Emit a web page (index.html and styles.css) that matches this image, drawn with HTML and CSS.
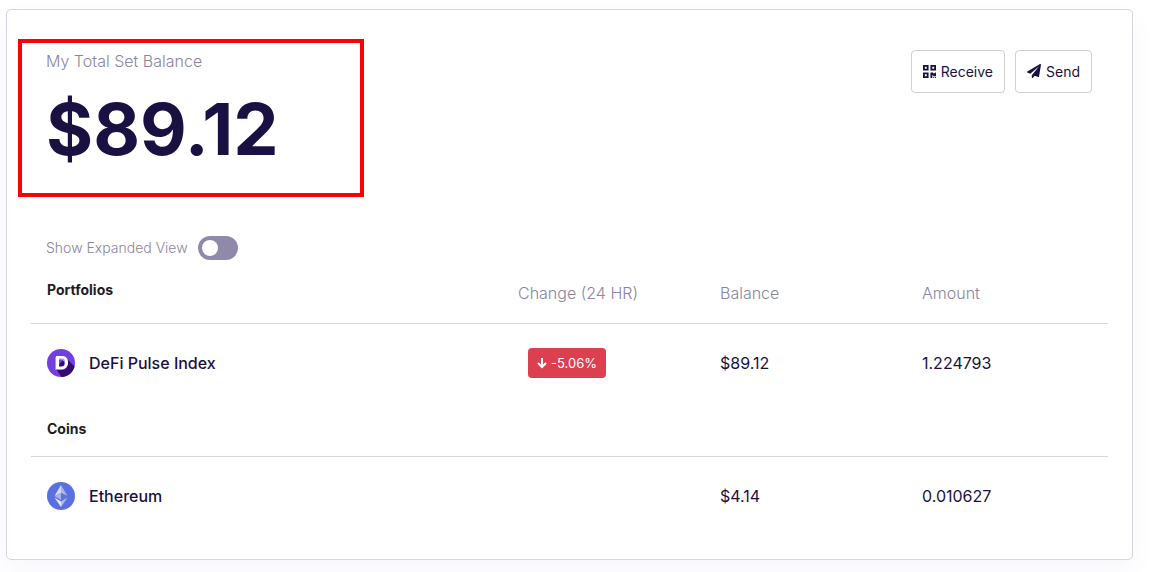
FILE: index.html
```html
<!DOCTYPE html>
<html lang="en">
<head>
    <meta charset="UTF-8">
    <meta name="viewport" content="width=device-width, initial-scale=1.0">
    <title>My Total Set Balance</title>
    <link rel="stylesheet" href="styles.css">
</head>
<body>
<main class="card">
    <header class="summary">
        <section class="total">
            <h1 class="total-label">My Total Set Balance</h1>
            <p class="total-value">$89.12</p>
        </section>
        <div class="actions">
            <button type="button" class="action">
                <svg width="13" height="13" viewBox="0 0 14 14" fill="currentColor" aria-hidden="true">
                    <path fill-rule="evenodd" d="M0 0h6v6H0zM2 2v2h2V2zM8 0h6v6H8zM10 2v2h2V2zM0 8h6v6H0zM2 10v2h2v-2z"/>
                    <path d="M8 8h3v1h2V8h1v4h-3v-1h-1v3H8zM11 13h1v1h-1zM13 13h1v1h-1z"/>
                </svg>
                Receive
            </button>
            <button type="button" class="action">
                <svg width="14" height="14" viewBox="0 0 512 512" fill="currentColor" aria-hidden="true">
                    <path d="M476 3.200L12.500 270.600c-18.100 10.400-15.800 35.600 2.200 43.200L121 358.400l287.300-253.200c5.500-4.900 13.300 2.600 8.600 8.300L176 407v80.500c0 23.600 28.500 32.900 42.500 15.800L282 426l124.600 52.200c14.200 6 30.400-2.900 33-18.200l72-432C515 7.800 493.300-6.800 476 3.200z"/>
                </svg>
                Send
            </button>
        </div>
    </header>

    <div class="view-switch">
        <label for="expanded">Show Expanded View</label>
        <input type="checkbox" id="expanded" class="toggle" role="switch">
    </div>

    <table class="holdings">
        <colgroup>
            <col>
            <col class="col-data">
            <col class="col-data">
            <col class="col-data">
        </colgroup>
        <thead>
        <tr>
            <th class="group">Portfolios</th>
            <th>Change (24 HR)</th>
            <th>Balance</th>
            <th>Amount</th>
        </tr>
        </thead>
        <tbody>
        <tr>
            <td>
                <div class="asset">
                    <svg width="28" height="28" viewBox="0 0 28 28" aria-hidden="true">
                        <defs>
                            <clipPath id="disc"><circle cx="14" cy="14" r="14"/></clipPath>
                        </defs>
                        <circle cx="14" cy="14" r="14" fill="#7340df"/>
                        <path d="M18 8L30 20V30H16L9 20z" fill="#340b6e" clip-path="url(#disc)"/>
                        <path fill="#a98bf0" fill-rule="evenodd" d="M8 8h6c4 0 6.500 2.500 6.500 6.500S18 21 14 21H8zM11 11v7h3c2 0 3.500-1.300 3.500-3.500S16 11 14 11z"/>
                        <path fill="#fff" fill-rule="evenodd" d="M9 7h6c4 0 6 2.500 6 6.500S19 20 15 20H9zM12 9.500v8h3c2 0 3-1.500 3-4s-1-4-3-4z"/>
                    </svg>
                    <span>DeFi Pulse Index</span>
                </div>
            </td>
            <td>
                <span class="change">
                    <svg width="10" height="12" viewBox="0 0 10 12" fill="none" stroke="currentColor" stroke-width="2" aria-hidden="true">
                        <path d="M5 1v9M1 6l4 4 4-4"/>
                    </svg>
                    -5.06%
                </span>
            </td>
            <td>$89.12</td>
            <td>1.224793</td>
        </tr>
        </tbody>
        <tbody>
        <tr class="group-row">
            <th class="group" colspan="4">Coins</th>
        </tr>
        <tr>
            <td>
                <div class="asset">
                    <svg width="28" height="28" viewBox="0 0 28 28" aria-hidden="true">
                        <circle cx="14" cy="14" r="14" fill="#5a70e0"/>
                        <path d="M14 3L7.500 14 14 11z" fill="#d5dcf8"/>
                        <path d="M14 3l6.500 11L14 11z" fill="#a9b6ee"/>
                        <path d="M14 11l-6.500 3L14 18z" fill="#a4b1ee"/>
                        <path d="M14 11l6.500 3L14 18z" fill="#6376cc"/>
                        <path d="M7.500 15.500L14 19.500V25z" fill="#e4e9fc"/>
                        <path d="M20.500 15.500L14 19.500V25z" fill="#b1bdf1"/>
                    </svg>
                    <span>Ethereum</span>
                </div>
            </td>
            <td></td>
            <td>$4.14</td>
            <td>0.010627</td>
        </tr>
        </tbody>
    </table>
</main>
</body>
</html>
```
FILE: styles.css
```css
* {
    box-sizing: border-box;
}

body {
    margin: 0;
    background: #fff;
    color: #1a1042;
    font-family: Inter, "Liberation Sans", sans-serif;
    font-size: 16px;
    line-height: 24px;
}

.card {
    margin: 9px 19px 12px 6px;
    padding: 29px 24px 24px;
    background: #fff;
    border: 1px solid #d5d3e6;
    border-radius: 5px;
    box-shadow: 0 10px 24px rgba(90, 70, 200, 0.05);
}

.summary {
    display: flex;
    justify-content: space-between;
    align-items: flex-start;
    padding-right: 16px;
    margin-left: -13px;
}

.total {
    width: 346px;
    padding: 6px 24px 18px;
    border: 4px solid #fb0207;
}

.total-label {
    margin: 0;
    color: #8a859e;
    font-size: 16px;
    font-weight: 300;
}

.total-value {
    margin: 10px 0 0;
    font-size: 72px;
    font-weight: 700;
    line-height: 92px;
}

.actions {
    display: flex;
    gap: 10px;
    padding-top: 11px;
}

.action {
    display: flex;
    align-items: center;
    gap: 5px;
    height: 43px;
    padding: 0 11px 1px;
    background: #fff;
    border: 1px solid #cfcfd6;
    border-radius: 4px;
    color: inherit;
    font-family: inherit;
    font-size: 14px;
    cursor: pointer;
}

.view-switch {
    display: flex;
    align-items: center;
    gap: 10px;
    margin-top: 39px;
    padding-left: 15px;
    color: #8a859e;
    font-size: 14px;
    font-weight: 300;
}

.toggle {
    appearance: none;
    width: 40px;
    height: 24px;
    margin: 0;
    padding: 4px;
    background: #9089a9;
    border-radius: 12px;
    cursor: pointer;
}

.toggle::before {
    content: "";
    display: block;
    width: 16px;
    height: 16px;
    background: #fff;
    border-radius: 50%;
}

.toggle:checked::before {
    margin-left: auto;
}

.holdings {
    width: 100%;
    table-layout: fixed;
    border-collapse: collapse;
}

.col-data {
    width: 202px;
}

.holdings th,
.holdings td {
    padding: 0 16px;
    text-align: left;
}

.holdings th {
    height: 63px;
    padding-top: 3px;
    border-bottom: 1px solid #d5d3e6;
    color: #8a859e;
    font-weight: 300;
}

.holdings td {
    height: 79px;
}

.holdings .group {
    padding: 0 16px 2px;
    color: #1d1d1f;
    font-size: 14px;
    font-weight: 700;
}

.holdings .group-row th {
    height: 54px;
    padding-bottom: 0;
}

.asset {
    display: flex;
    align-items: center;
    gap: 14px;
    font-weight: 500;
}

.change {
    display: inline-flex;
    align-items: center;
    gap: 4px;
    height: 30px;
    margin-left: 10px;
    padding: 0 9px;
    background: #db3f50;
    border-radius: 4px;
    color: #fff;
    font-size: 13px;
}
```
